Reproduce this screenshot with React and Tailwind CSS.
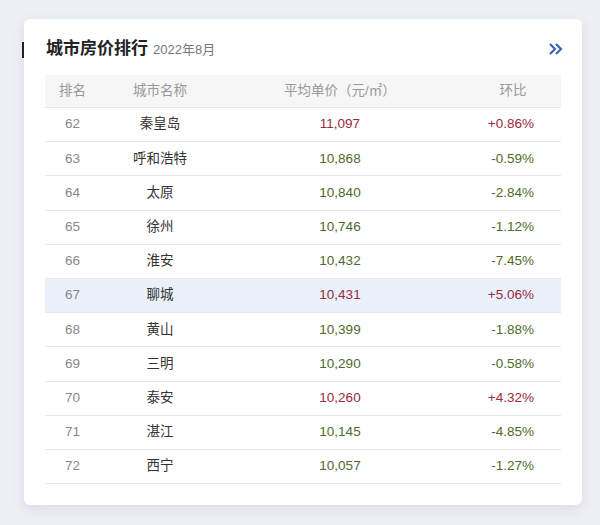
const rows = [
  [62, '秦皇岛', '11,097', '+0.86%'],
  [63, '呼和浩特', '10,868', '-0.59%'],
  [64, '太原', '10,840', '-2.84%'],
  [65, '徐州', '10,746', '-1.12%'],
  [66, '淮安', '10,432', '-7.45%'],
  [67, '聊城', '10,431', '+5.06%'],
  [68, '黄山', '10,399', '-1.88%'],
  [69, '三明', '10,290', '-0.58%'],
  [70, '泰安', '10,260', '+4.32%'],
  [71, '湛江', '10,145', '-4.85%'],
  [72, '西宁', '10,057', '-1.27%'],
]

export default function App() {
  return (
    <div className="w-[600px] h-[525px] bg-[#eef0f5] pt-[19px] pl-[24px]" style={{ fontFamily: '"Liberation Sans", "Noto Sans CJK SC", sans-serif' }}>
      <div className="w-[558px] h-[486px] bg-white rounded-md shadow-[0_4px_12px_rgba(150,160,190,0.25)] relative">
        <div className="absolute left-[-2px] top-[23px] w-[2px] h-[16px] bg-[#222]" />
        <div className="flex items-center justify-between pl-[22px] pr-[18px] pt-[12px] h-[56px] pb-[8px]">
          <div className="flex items-baseline gap-[5px]">
            <span className="text-[17px] font-bold text-[#222]">城市房价排行</span>
            <span className="text-[13px] text-[#777]">2022年8月</span>
          </div>
          <svg width="16" height="16" viewBox="0 0 16 16" fill="none" stroke="#3a66b0" strokeWidth="2.2">
            <path d="M2 3l5 5-5 5M8 3l5 5-5 5" />
          </svg>
        </div>
        <div className="mx-[21px]">
          <div className="flex h-[33px] items-center bg-[#f6f6f7] text-[13.5px] text-[#999] border-b border-[#e6e6e6]">
            <div className="w-[55px] text-center">排名</div>
            <div className="w-[120px] text-center">城市名称</div>
            <div className="w-[240px] text-center">平均单价（元/㎡）</div>
            <div className="flex-1 text-center pl-[5px]">环比</div>
          </div>
          {rows.map(([r, c, p, ch]) => {
            const up = ch.startsWith('+')
            return (
              <div key={r} className={`flex h-[34.2px] items-center text-[13.5px] border-b border-[#e8e8e8] ${r === 67 ? 'bg-[#e9f1fb]' : ''}`}>
                <div className="w-[55px] text-center text-[#888]">{r}</div>
                <div className="w-[120px] text-center text-[#333]">{c}</div>
                <div className={`w-[240px] text-center ${up ? 'text-[#9a2a3c]' : 'text-[#4e6a2c]'}`}>{p}</div>
                <div className={`flex-1 text-right pr-[27px] ${up ? 'text-[#9a2a3c]' : 'text-[#4e6a2c]'}`}>{ch}</div>
              </div>
            )
          })}
        </div>
      </div>
    </div>
  )
}
